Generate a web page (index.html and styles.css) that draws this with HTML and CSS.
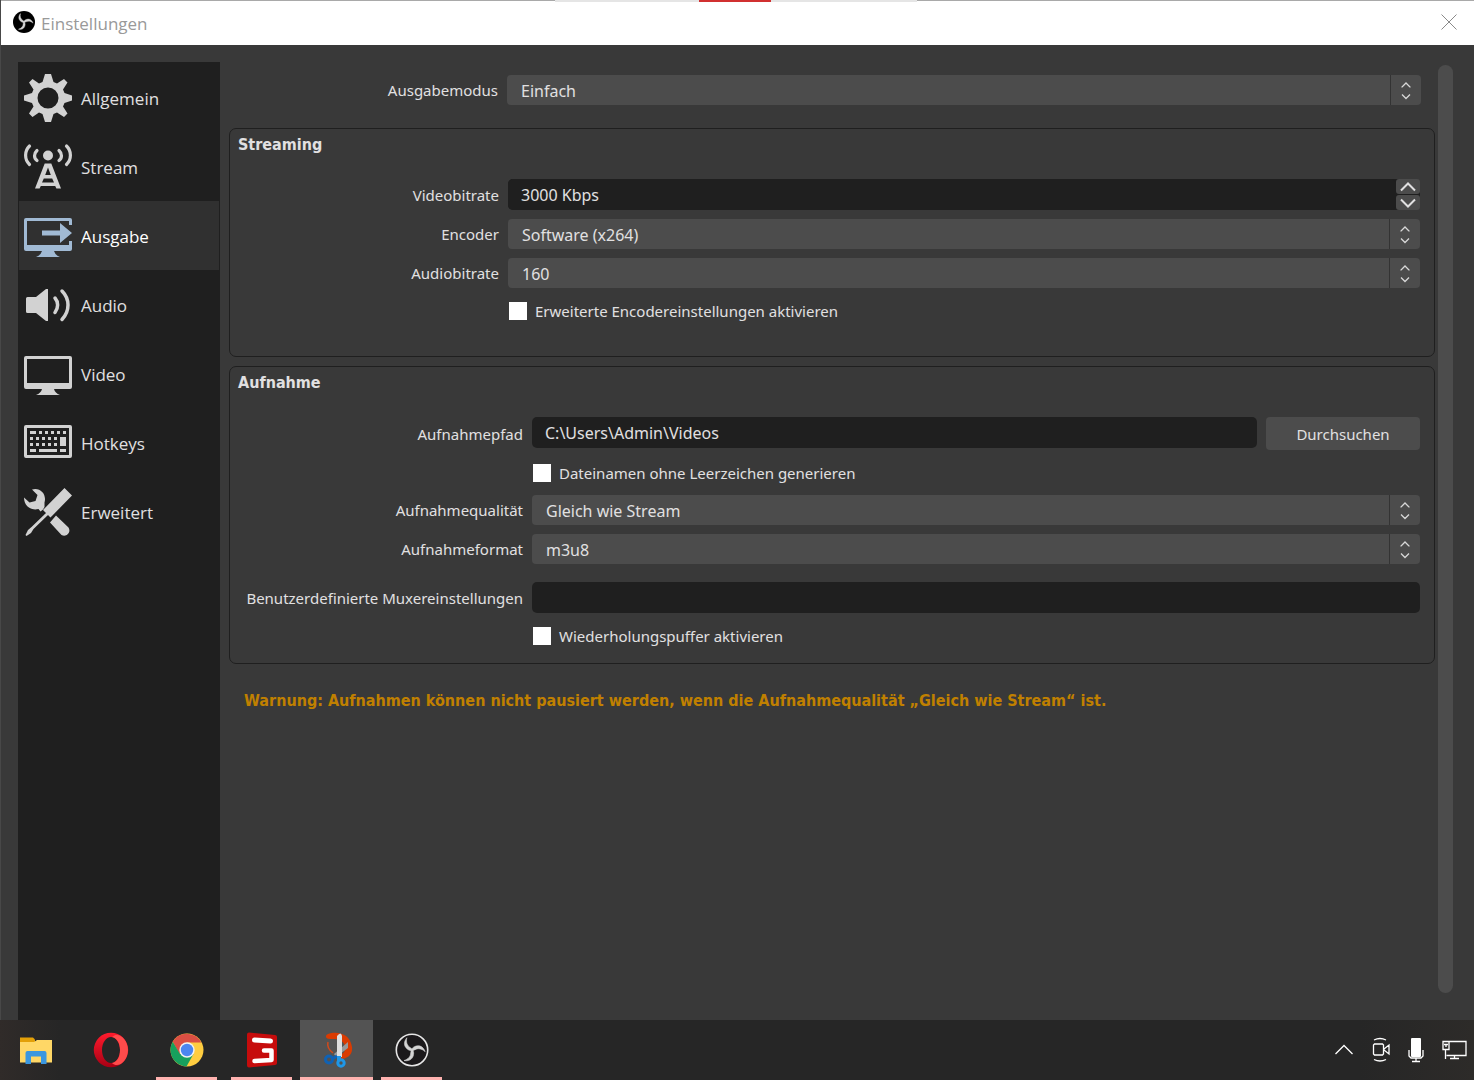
FILE: index.html
```html
<!DOCTYPE html>
<html lang="de">
<head>
    <meta charset="UTF-8">
    <meta name="viewport" content="width=device-width, initial-scale=1.0">
    <title>Einstellungen</title>
    <link rel="stylesheet" href="styles.css">
</head>
<body>
    <!-- shared symbols -->
    <svg class="symbols" width="0" height="0">
        <symbol id="updown" viewBox="0 0 10 18">
            <path d="M1 5.500V5l4-4 4 4v.5M1 12.500l4 4 4-4" fill="none" stroke="#d8d8d8" stroke-width="1.3"/>
        </symbol>
        <symbol id="obs" viewBox="0 0 34 34">
            <g fill="#d4d4d4" stroke="#d4d4d4" stroke-width=".6">
                <path d="M17 16L15 14.300C12 12.500 10.500 9 11.500 4C7 9.500 9 14.500 13.500 17L17 18z"/>
                <path transform="rotate(120 17 17)" d="M17 16L15 14.300C12 12.500 10.500 9 11.500 4C7 9.500 9 14.500 13.500 17L17 18z"/>
                <path transform="rotate(240 17 17)" d="M17 16L15 14.300C12 12.500 10.500 9 11.500 4C7 9.500 9 14.500 13.500 17L17 18z"/>
            </g>
        </symbol>
    </svg>

    <div class="window">
        <header class="titlebar">
            <svg class="logo" viewBox="0 0 34 34"><circle cx="17" cy="17" r="17"/><use href="#obs" width="34" height="34"/></svg>
            <h1>Einstellungen</h1>
            <button type="button" class="close" aria-label="Schließen">
                <svg width="16" height="16" viewBox="0 0 16 16"><path d="M.5.5l15 15M15.500.5l-15 15" stroke="#8a8a8a" fill="none"/></svg>
            </button>
            <div class="top_strip"><span></span></div>
        </header>

        <main class="main">
            <nav class="sidebar">
                <a href="#">
                    <svg viewBox="0 0 48 48"><path fill-rule="evenodd" d="M21 0h6l2.500 8 3.500 1.500L40 5l3.500 3.500L39 15.500l1.500 3.500 7.500 2.500v5L40.500 29 39 32.500l4.500 7L40 43l-7-4.500-3.500 1.500L27 48h-6l-2.500-8-3.500-1.500L8.500 43 5 39.500 9.500 32.500 8 29 0 26.500v-5L8 19l1.500-3.500L5 8.500 8.500 5l6.500 4.500L18.500 8zM24 13.500a10.500 10.500 0 1 0 0 21 10.500 10.500 0 0 0 0-21z"/></svg>
                    <span>Allgemein</span>
                </a>
                <a href="#">
                    <svg viewBox="0 0 48 48"><circle cx="24" cy="12.500" r="5"/><path fill="none" stroke="#d2d2d2" stroke-width="3.200" stroke-linecap="round" d="M5.500 3C.3 8 .3 16.500 5.500 21.500M42.500 3c5.200 5 5.200 13.500 0 18.500M13 7.500c-3.300 3-3.300 7.500 0 10M35 7.500c3.300 3 3.300 7.500 0 10"/><path fill-rule="evenodd" d="M20.700 20.500h6.600L37 45.500h-4.600l-1.200-2.500H16.800l-1.200 2.500H11zM24 24.500L21.200 32h5.600zM19.800 35.500l-1.800 4h12l-1.800-4z"/></svg>
                    <span>Stream</span>
                </a>
                <a href="#" class="active">
                    <svg viewBox="0 0 48 48"><path fill-rule="evenodd" d="M2 6h44a2 2 0 0 1 2 2v5h-3V9H3v24h42v-4h3v8a2 2 0 0 1-2 2H30q1 4 6 6H12q5-2 6-6H2a2 2 0 0 1-2-2V8a2 2 0 0 1 2-2zM18 18.500h18V11l12 10-12 10v-7.500H18z"/></svg>
                    <span>Ausgabe</span>
                </a>
                <a href="#">
                    <svg viewBox="0 0 48 48"><path d="M3.500 16H12L22 8h2v32h-2L12 32H3.500A1.500 1.500 0 0 1 2 30.500v-13A1.500 1.500 0 0 1 3.500 16z"/><path fill="none" stroke="#d2d2d2" stroke-width="3.500" stroke-linecap="round" d="M31 17c3.500 4 3.500 10 0 14.500M38 10c8 8 8 20 0 28.500"/></svg>
                    <span>Audio</span>
                </a>
                <a href="#">
                    <svg viewBox="0 0 48 48"><path fill-rule="evenodd" d="M2 6h44a2 2 0 0 1 2 2v29a2 2 0 0 1-2 2H30q1 4 6 6H12q5-2 6-6H2a2 2 0 0 1-2-2V8a2 2 0 0 1 2-2zM3 9v24h42V9z"/></svg>
                    <span>Video</span>
                </a>
                <a href="#">
                    <svg viewBox="0 0 48 48"><path fill-rule="evenodd" d="M2 6h44a2 2 0 0 1 2 2v29a2 2 0 0 1-2 2H2a2 2 0 0 1-2-2V8a2 2 0 0 1 2-2zM3 9v27h42V9z"/><path fill="none" stroke="#d2d2d2" stroke-width="3" d="M6 13.500h6m3 0h3m3 0h3m3 0h3m3 0h3m3 0h3M6 19.500h3m3 0h3m3 0h3m3 0h3m3 0h3M6 25.500h3m3 0h3m3 0h3m3 0h3m3 0h3M6 31.500h6m3 0h18m3 0h6"/><path d="M36 18h6v9h-6z"/></svg>
                    <span>Hotkeys</span>
                </a>
                <a href="#">
                    <svg viewBox="0 0 48 48"><path d="M40.500 0L48 7.500 26.500 29.500 19 22zM22 25l2 2L9.500 41 7 45l-4.500 3-1-1L4 42l3.500-3zM32 27.500l12.500 12c3 5-2 10-7 7.500L26 34.500z"/><path d="M8 1.500C16-1 23 6 20.500 14.500V19l-1.500 2.500-2.500 2-2-2.500C7 23 0 18 0 9.500l5.500 5 6-1.500 2-6z"/></svg>
                    <span>Erweitert</span>
                </a>
            </nav>

            <form class="content">
                <div class="form_grid mode">
                    <label for="mode">Ausgabemodus</label>
                    <div class="select">
                        <select id="mode"><option>Einfach</option><option>Erweitert</option></select>
                        <svg><use href="#updown"/></svg>
                    </div>
                </div>

                <section class="group">
                    <h2>Streaming</h2>
                    <div class="form_grid streaming">
                        <label for="vbitrate">Videobitrate</label>
                        <div class="spin">
                            <input type="text" id="vbitrate" value="3000 Kbps">
                            <div class="spin_btns">
                                <button type="button" aria-label="Mehr"><svg viewBox="0 0 16 10"><path d="M1 8.500l7-7 7 7"/></svg></button>
                                <button type="button" aria-label="Weniger"><svg viewBox="0 0 16 10"><path d="M1 1.500l7 7 7-7"/></svg></button>
                            </div>
                        </div>
                        <label for="encoder">Encoder</label>
                        <div class="select">
                            <select id="encoder"><option>Software (x264)</option></select>
                            <svg><use href="#updown"/></svg>
                        </div>
                        <label for="abitrate">Audiobitrate</label>
                        <div class="select">
                            <select id="abitrate"><option>160</option></select>
                            <svg><use href="#updown"/></svg>
                        </div>
                        <div class="check">
                            <input type="checkbox" id="adv"><label for="adv">Erweiterte Encodereinstellungen aktivieren</label>
                        </div>
                    </div>
                </section>

                <section class="group">
                    <h2>Aufnahme</h2>
                    <div class="form_grid recording">
                        <label for="path">Aufnahmepfad</label>
                        <div class="path">
                            <input type="text" id="path" value="C:\Users\Admin\Videos">
                            <button type="button">Durchsuchen</button>
                        </div>
                        <div class="check">
                            <input type="checkbox" id="nospace"><label for="nospace">Dateinamen ohne Leerzeichen generieren</label>
                        </div>
                        <label for="quality">Aufnahmequalität</label>
                        <div class="select">
                            <select id="quality"><option>Gleich wie Stream</option></select>
                            <svg><use href="#updown"/></svg>
                        </div>
                        <label for="format">Aufnahmeformat</label>
                        <div class="select">
                            <select id="format"><option>m3u8</option></select>
                            <svg><use href="#updown"/></svg>
                        </div>
                        <label for="muxer" class="spaced">Benutzerdefinierte Muxereinstellungen</label>
                        <input type="text" id="muxer" class="spaced">
                        <div class="check">
                            <input type="checkbox" id="replay"><label for="replay">Wiederholungspuffer aktivieren</label>
                        </div>
                    </div>
                </section>

                <p class="warning">Warnung: Aufnahmen können nicht pausiert werden, wenn die Aufnahmequalität „Gleich wie Stream“ ist.</p>
            </form>
            <div class="scrollbar"></div>
        </main>
    </div>

    <footer class="taskbar">
        <button type="button" class="app" aria-label="Explorer">
            <svg viewBox="0 0 36 36"><path fill="#e3a008" d="M2 5.500h13l2 2v5H2z"/><path fill="#ffd766" d="M2 10h14l3-2h15v22.500H2z"/><path fill="#3b97e0" d="M9.500 19h17q2 0 2 2v11H23v-7.500H13V32H7.500V21q0-2 2-2z"/></svg>
        </button>
        <button type="button" class="app" aria-label="Opera">
            <svg viewBox="0 0 36 36"><defs><linearGradient id="op" x2="0" y2="1"><stop stop-color="#ff1b2d"/><stop offset="1" stop-color="#a70014"/></linearGradient></defs><path fill="url(#op)" fill-rule="evenodd" d="M18 .8a17.200 17.200 0 1 0 0 34.400A17.200 17.200 0 1 0 18 .8zM18 5c5 0 9 6 9 13s-4 13-9 13-9-6-9-13 4-13 9-13z"/><path fill="#ff4b4b" d="M19 5C25-1 35 7 35 18S25 37 19 31c5-1 8-6 8-13S24 6 19 5z"/></svg>
        </button>
        <button type="button" class="app running" aria-label="Chrome">
            <svg viewBox="0 0 36 36"><circle cx="18" cy="18" r="16.500" fill="#ffcd40"/><path fill="#db4f43" d="M3.700 9.700A16.500 16.500 0 0 1 32.300 10.500H18L10.500 22z"/><path fill="#17a05d" d="M3.700 9.700A16.500 16.500 0 0 0 17.500 34.500L24.500 22H11z"/><circle cx="18" cy="18" r="7.700" fill="#f1f1f1"/><circle cx="18" cy="18" r="6.200" fill="#4a86f0"/></svg>
        </button>
        <button type="button" class="app running" aria-label="Videorekorder">
            <svg viewBox="0 0 36 36"><path fill="#c60c0c" d="M5 .5L31 3q2 0 2 2v26q0 2-2 2L5 35.500q-2 0-2-2v-31Q3 .5 5 .5z"/><path fill="none" stroke="#fff" stroke-width="5" stroke-linecap="round" d="M10.500 8L26.500 9"/><path fill="none" stroke="#fff" stroke-width="4.500" stroke-linecap="round" stroke-linejoin="round" d="M20 18.500h7.500v9.500L10.500 29"/></svg>
        </button>
        <button type="button" class="app running current" aria-label="Snipping Tool">
            <svg viewBox="0 0 36 36"><path fill="#da3b01" d="M9 2C16-1 31 0 33 15c1 8-5 12-12 12l-1-4c5-1 7-5 6-9C24 7 17 7 11 7 6 7 6 3 9 2z"/><path fill="none" stroke="#d04a1c" stroke-width="1.500" d="M9 10c-1 4 1 8 5 11"/><path fill="#999" d="M29 10v6L17 25l-2-3z"/><path fill="#dedede" d="M18 4q4-5 5 0v21h-5z"/><path fill="none" stroke="#0f62b5" stroke-width="3" d="M18 24l-5 3"/><circle cx="10" cy="27.500" r="3.500" fill="none" stroke="#0f62b5" stroke-width="3"/><path fill="#1e97e8" d="M18 24h4v5h-4z"/><circle cx="22" cy="31" r="3.200" fill="none" stroke="#1e97e8" stroke-width="3"/></svg>
        </button>
        <button type="button" class="app running last" aria-label="OBS">
            <svg viewBox="0 0 36 36"><circle cx="18" cy="18" r="15.700" fill="#1b191b" stroke="#e6e6e6" stroke-width="1.600"/><use href="#obs" x="2" y="2" width="32" height="32"/></svg>
        </button>
        <div class="tray">
            <svg width="20" height="26" viewBox="0 0 20 26"><path d="M1.500 17L10 8.500l8.500 8.500"/></svg>
            <svg width="18" height="26" viewBox="0 0 18 26"><path d="M2 3q6-3 12 0M2 22.500q6 3 12 0M2.500 7h8l1 1v9l-1 1h-8l-1-1V8zM12 12l5-4v9l-5-4"/></svg>
            <svg width="16" height="26" viewBox="0 0 16 26"><rect x="3" y="1" width="10" height="19" rx="1" fill="#fff" stroke="none"/><path d="M1 13v6l2 2h10l2-2v-6M8 21v3M4 24.500h8"/></svg>
            <svg width="25" height="26" viewBox="0 0 25 26"><path d="M7 4.500h17V18.500H4.500M1 4.500h6v8H1zM2 7.500h4M4 7v3M3.500 12.500V22M12.500 19v3M8 21.500h9"/></svg>
        </div>
    </footer>
</body>
</html>
```
FILE: styles.css
```css
*{
    margin: 0;
    padding: 0;
    box-sizing: border-box;
}
body{
    display: flex;
    flex-direction: column;
    height: 100vh;
    overflow: hidden;
    background-color: #393939;
    color: #e1e0e1;
    font-family: "Noto Sans", "Open Sans", sans-serif;
    font-size: 16px;
}
button, input, select{
    border: none;
    outline: none;
    color: inherit;
    font: inherit;
}
.symbols{
    position: absolute;
}
.window{
    flex: 1;
    min-height: 0;
    display: flex;
    flex-direction: column;
    border-left: 1px solid #484848;
}

/* title bar */
.titlebar{
    position: relative;
    display: flex;
    align-items: center;
    height: 45px;
    padding: 0 17px 2px 12px;
    border-top: 1px solid #a9a9a9;
    background-color: #fff;
}
.logo{
    width: 22px;
    height: 22px;
}
.titlebar h1{
    flex: 1;
    margin-left: 6px;
    padding-top: 2px;
    color: #999;
    font-family: "Open Sans", sans-serif;
    font-size: 17px;
    font-weight: normal;
}
.close{
    width: 16px;
    height: 16px;
    background: none;
}
.close svg{
    display: block;
}
.top_strip{
    position: absolute;
    top: -1px;
    left: 554px;
    width: 362px;
    height: 2px;
    background-color: #e5e5e5;
}
.top_strip span{
    display: block;
    width: 72px;
    height: 2px;
    margin-left: 144px;
    background-color: #d13030;
}

.main{
    flex: 1;
    min-height: 0;
    display: flex;
    padding: 17px 21px 0 17px;
}

/* sidebar */
.sidebar{
    width: 202px;
    padding: 1px;
    background-color: #1f1f1f;
}
.sidebar a{
    display: flex;
    align-items: center;
    gap: 9px;
    height: 69px;
    padding-left: 5px;
    color: #e1e0e1;
    font-family: "Open Sans", sans-serif;
    font-size: 17px;
    text-decoration: none;
}
.sidebar span{
    padding-top: 2px;
}
.sidebar svg{
    width: 48px;
    height: 48px;
    fill: #d2d2d2;
}
.sidebar .active{
    background-color: #303030;
    color: #fff;
}
.sidebar .active svg{
    fill: #a1bad4;
}

/* settings form */
.content{
    flex: 1;
    padding: 13px 3px 0 9px;
}
.form_grid{
    display: grid;
    gap: 9px;
    align-items: center;
}
.content label, .path button{
    font-size: 15px;
}
.form_grid > label{
    text-align: right;
    white-space: nowrap;
}
.mode{
    grid-template-columns: 269px 1fr;
    padding-right: 14px;
}
.streaming{
    grid-template-columns: 255px 1fr;
    padding-bottom: 18px;
}
.recording{
    grid-template-columns: 279px 1fr;
}
.group{
    margin-top: 9px;
    padding: 5px 14px 14px;
    border: 1px solid #1f1f1f;
    border-radius: 7px;
}
.mode + .group{
    margin-top: 23px;
}
.group h2{
    height: 45px;
    margin-left: -6px;
    line-height: 22px;
}
.group h2, .warning{
    font-family: "DejaVu Sans Condensed", "Noto Sans", sans-serif;
    font-size: 16px;
    font-weight: bold;
}
.select{
    position: relative;
}
.select::after{
    content: "";
    position: absolute;
    top: 0;
    right: 30px;
    width: 1px;
    height: 100%;
    background-color: #333;
}
.select svg{
    position: absolute;
    top: 7px;
    right: 10px;
    width: 10px;
    height: 18px;
    pointer-events: none;
}
select{
    display: block;
    width: 100%;
    height: 30px;
    padding: 2px 44px 0 14px;
    border-radius: 4px;
    background-color: #4c4c4c;
    appearance: none;
}
input[type="text"]{
    width: 100%;
    height: 31px;
    padding: 1px 13px 0;
    border-radius: 5px;
    background-color: #1f1f1f;
}
.spin{
    display: flex;
    border-radius: 5px;
    background-color: #1f1f1f;
}
.spin_btns{
    display: flex;
    flex-direction: column;
    gap: 1px;
}
.spin_btns button{
    flex: 1;
    width: 24px;
    border-radius: 3px;
    background-color: #4c4c4c;
}
.spin_btns svg{
    display: block;
    width: 16px;
    height: 10px;
    margin: 0 auto;
    fill: none;
    stroke: #e1e0e1;
    stroke-width: 2;
}
.path{
    display: flex;
    align-items: flex-start;
    gap: 9px;
}
.path button{
    flex-shrink: 0;
    width: 154px;
    height: 33px;
    border-radius: 4px;
    background-color: #4c4c4c;
}
.check{
    grid-column: 2;
    display: flex;
    align-items: center;
    gap: 8px;
    height: 27px;
    padding-left: 1px;
}
.check input{
    width: 18px;
    height: 18px;
    background-color: #fff;
    appearance: none;
}
.check input:checked{
    background-color: #a1bad4;
}
.spaced{
    margin-top: 9px;
}
.warning{
    margin: 26px 15px 0;
    color: #c08000;
    line-height: 22px;
}
.scrollbar{
    width: 15px;
    margin: 3px 0 27px;
    border-radius: 8px;
    background-color: #4c4c4c;
}

/* taskbar */
.taskbar{
    display: flex;
    align-items: center;
    height: 60px;
    background: linear-gradient(to right, #302b29, #262626 60px, #262626 1360px, #2d2b29);
}
.app{
    width: 72px;
    height: 60px;
    margin-right: 3px;
    padding-top: 3px;
    border-bottom: 3px solid transparent;
    background: none;
}
.app svg{
    display: block;
    width: 36px;
    height: 36px;
    margin: 0 auto;
}
.running{
    width: 61px;
    margin: 0 8px 0 6px;
    border-bottom-color: #ffb3b0;
}
.current{
    width: 73px;
    margin: 0;
    background-color: #535353;
}
.last{
    margin-left: 8px;
}
.tray{
    display: flex;
    gap: 18px;
    margin-left: auto;
    padding-right: 7px;
}
.tray svg{
    fill: none;
    stroke: #fff;
    stroke-width: 1.3;
}
```
